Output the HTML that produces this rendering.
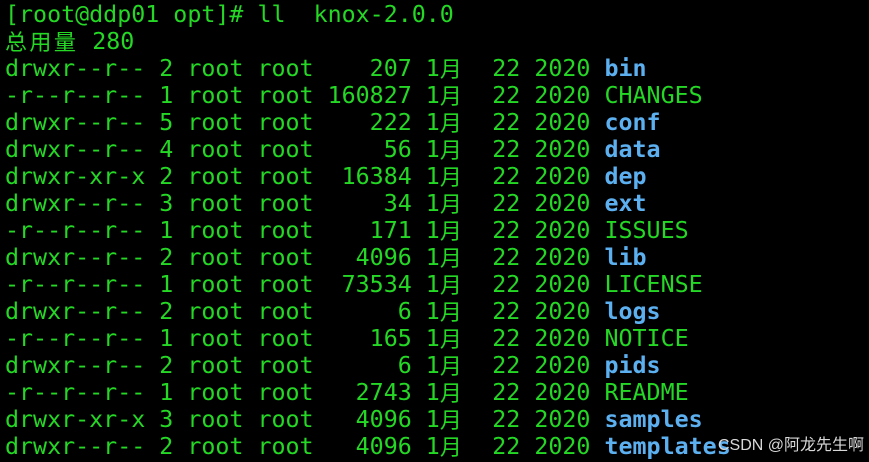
<!DOCTYPE html>
<html><head><meta charset="utf-8"><style>
html,body{margin:0;padding:0;background:#000;width:869px;height:459px;overflow:hidden}
.t{position:absolute;left:5px;top:1px;font-family:"DejaVu Sans Mono","Liberation Mono","Noto Sans CJK SC",monospace;font-size:23.3px;color:#25d825}
.t div{height:27px;line-height:27px;overflow:visible;white-space:pre}
.b{color:#5cb0f0;font-weight:bold}
.c{display:inline-block;width:2ch;height:27px;line-height:27px;vertical-align:top;font-family:"Noto Sans CJK SC",sans-serif;font-size:22px}
.wm{position:absolute;left:718px;top:431px;font-family:"Liberation Sans","Noto Sans CJK SC",sans-serif;font-size:16px;color:#d8d8d8}
</style></head><body>
<div class="t"><div>[root@ddp01 opt]# ll  knox-2.0.0</div><div><span class="c">总</span><span class="c">用</span><span class="c">量</span> 280</div><div>drwxr--r-- 2 root root    207 1<span class="c">月</span>  22 2020 <span class="b">bin</span></div><div>-r--r--r-- 1 root root 160827 1<span class="c">月</span>  22 2020 CHANGES</div><div>drwxr--r-- 5 root root    222 1<span class="c">月</span>  22 2020 <span class="b">conf</span></div><div>drwxr--r-- 4 root root     56 1<span class="c">月</span>  22 2020 <span class="b">data</span></div><div>drwxr-xr-x 2 root root  16384 1<span class="c">月</span>  22 2020 <span class="b">dep</span></div><div>drwxr--r-- 3 root root     34 1<span class="c">月</span>  22 2020 <span class="b">ext</span></div><div>-r--r--r-- 1 root root    171 1<span class="c">月</span>  22 2020 ISSUES</div><div>drwxr--r-- 2 root root   4096 1<span class="c">月</span>  22 2020 <span class="b">lib</span></div><div>-r--r--r-- 1 root root  73534 1<span class="c">月</span>  22 2020 LICENSE</div><div>drwxr--r-- 2 root root      6 1<span class="c">月</span>  22 2020 <span class="b">logs</span></div><div>-r--r--r-- 1 root root    165 1<span class="c">月</span>  22 2020 NOTICE</div><div>drwxr--r-- 2 root root      6 1<span class="c">月</span>  22 2020 <span class="b">pids</span></div><div>-r--r--r-- 1 root root   2743 1<span class="c">月</span>  22 2020 README</div><div>drwxr-xr-x 3 root root   4096 1<span class="c">月</span>  22 2020 <span class="b">samples</span></div><div>drwxr--r-- 2 root root   4096 1<span class="c">月</span>  22 2020 <span class="b">templates</span></div></div>
<div class="wm">CSDN @阿龙先生啊</div>
</body></html>
